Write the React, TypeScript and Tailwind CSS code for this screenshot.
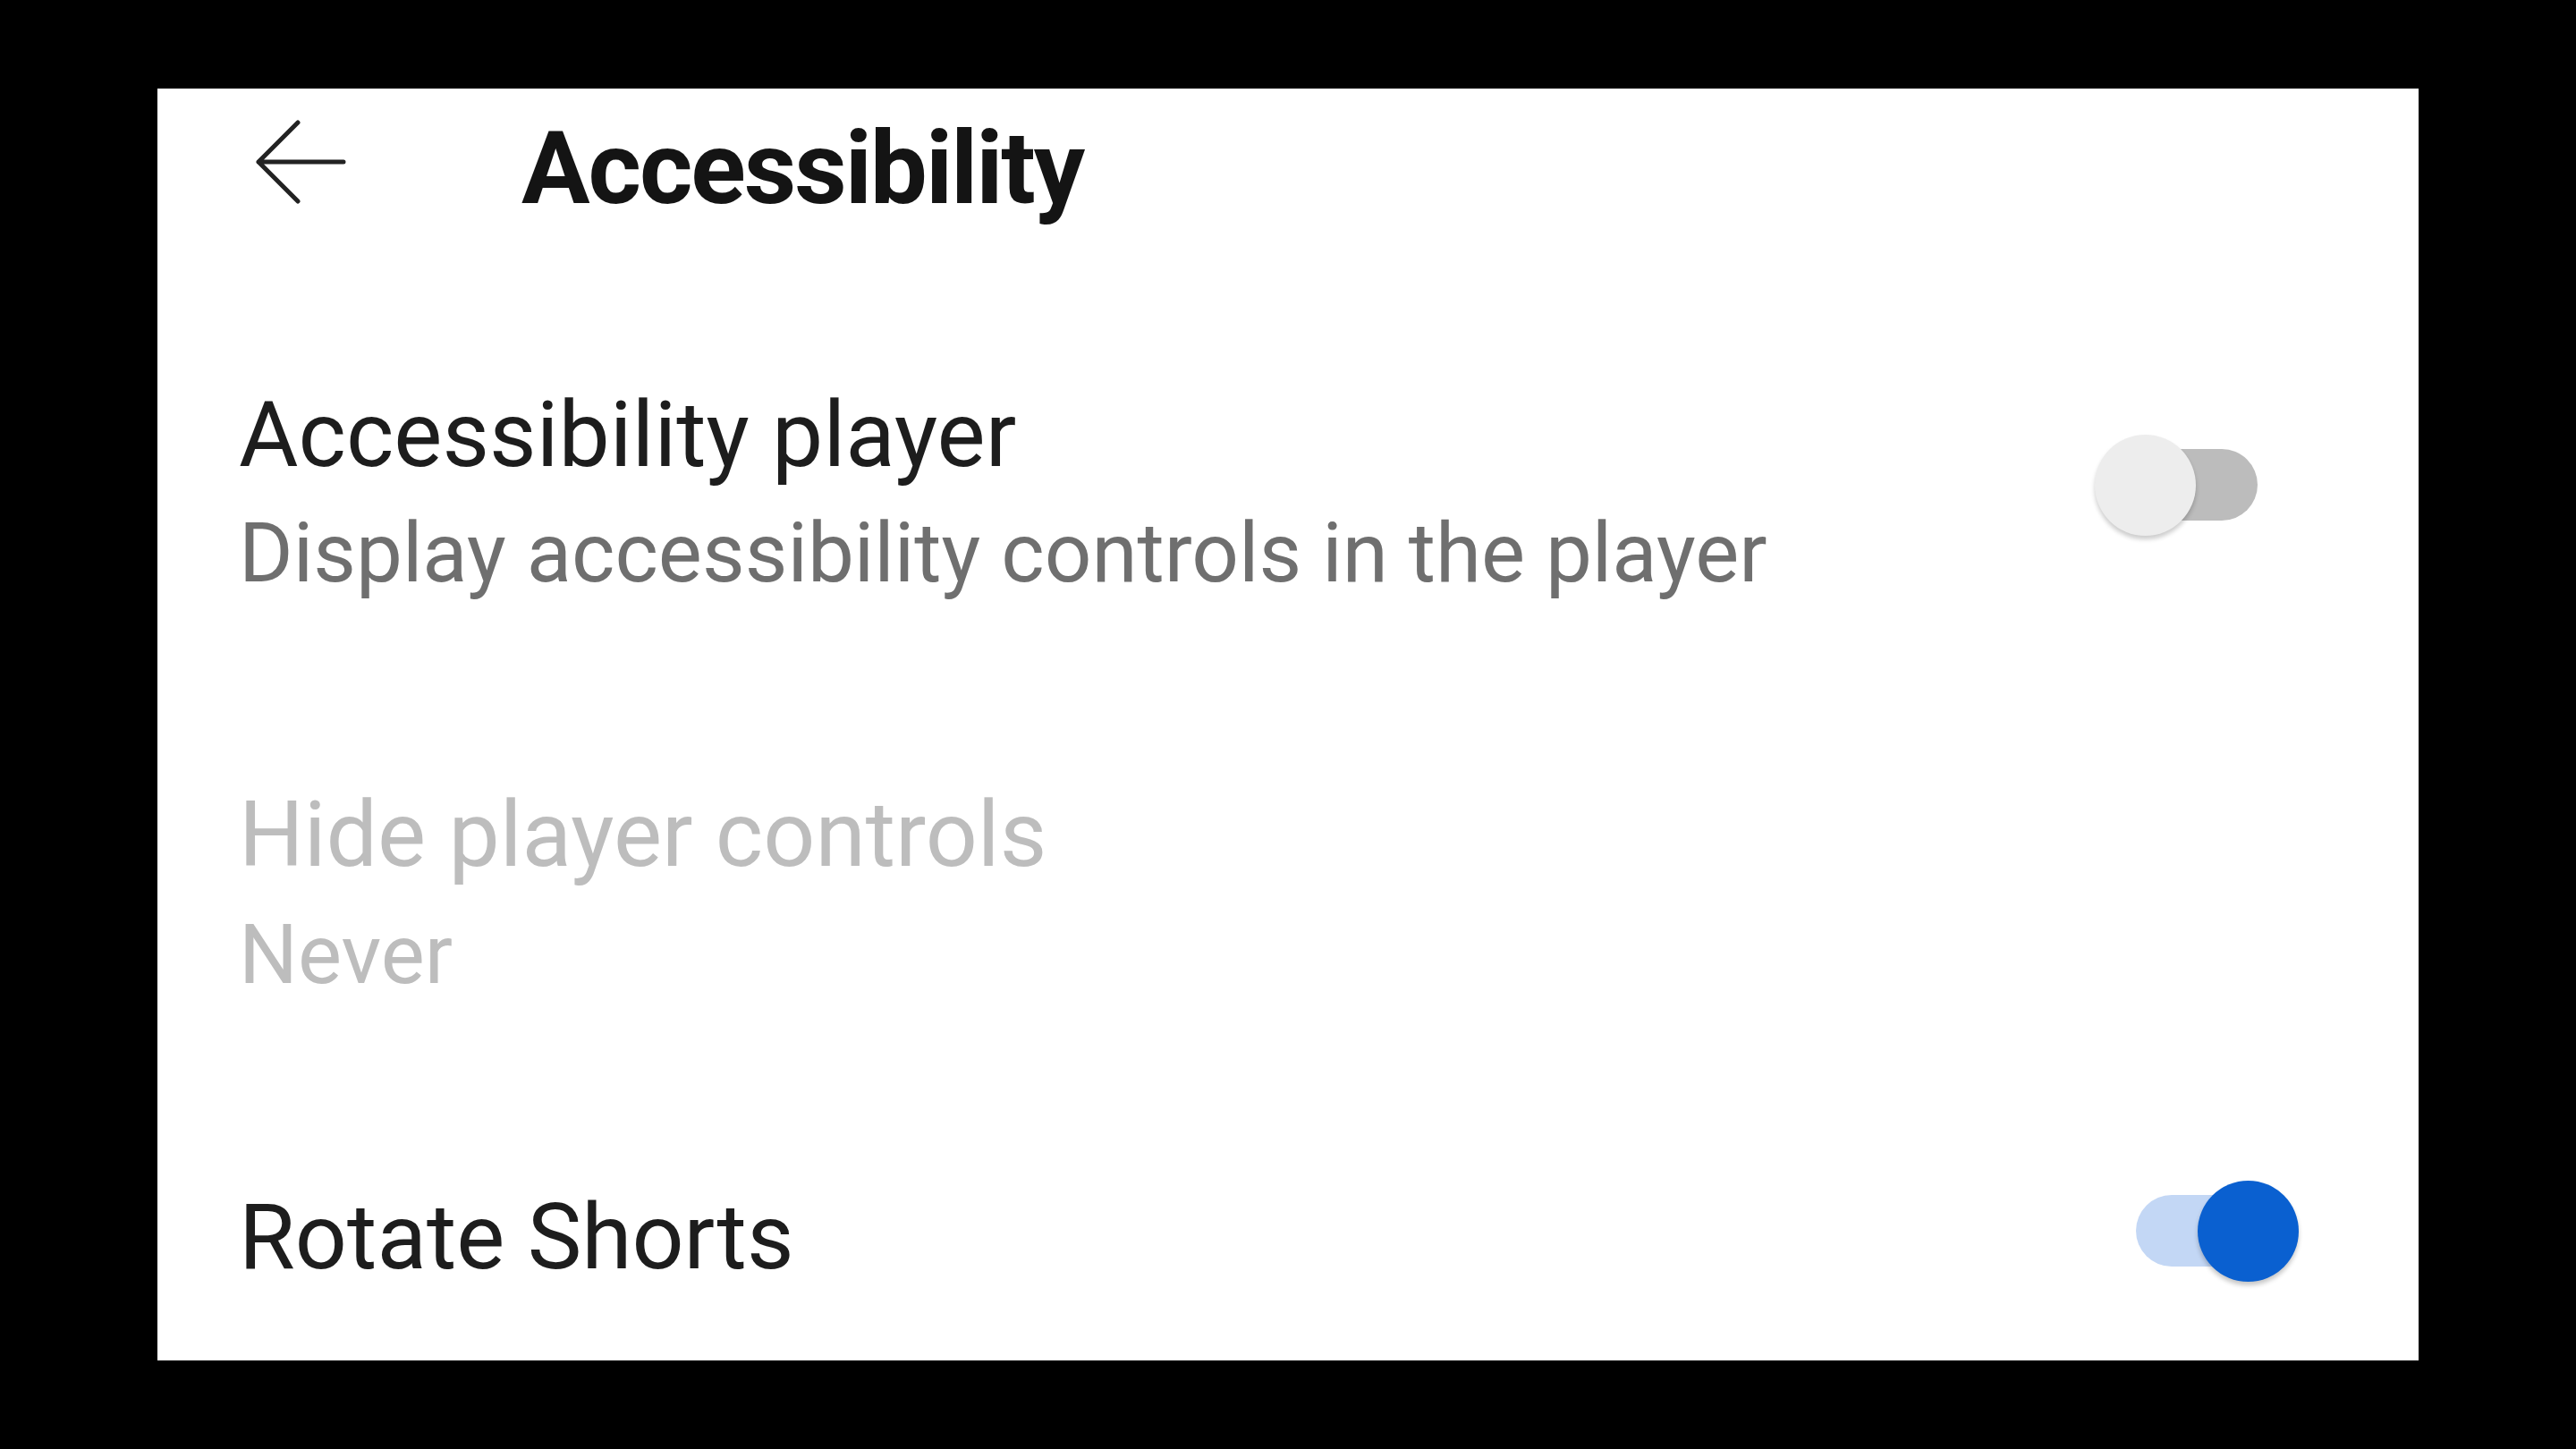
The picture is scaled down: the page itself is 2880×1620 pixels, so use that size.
import type { ReactNode } from 'react'

function BackArrow() {
  return (
    <svg viewBox="0 0 101 94" className="w-[101px] h-[94px] mt-[3px] flex-shrink-0" fill="none">
      <path d="M47 3 L3 47 L47 91 M3 47 H98" stroke="#222222" strokeWidth={5} strokeLinecap="round" strokeLinejoin="round" />
    </svg>
  )
}

function Toggle({ on }: { on: boolean }) {
  return (
    <div className="relative w-[182px] h-[113px] flex-shrink-0">
      {/* track */}
      <div
        className={
          on
            ? 'absolute top-[16px] left-0 right-[20px] h-[80px] rounded-full bg-[#c3d7f5]'
            : 'absolute top-[16px] left-[20px] right-0 h-[80px] rounded-full bg-[#bcbcbc]'
        }
      />
      {/* knob */}
      <div
        className={
          on
            ? 'absolute top-0 right-0 w-[113px] h-[113px] rounded-full bg-[#0a60d0] shadow-[0_4px_5px_rgba(0,0,0,0.22)]'
            : 'absolute top-0 left-0 w-[113px] h-[113px] rounded-full bg-[#ededed] shadow-[0_4px_5px_rgba(0,0,0,0.2)]'
        }
      />
    </div>
  )
}

function RowTitle({ children, muted }: { children: ReactNode; muted?: boolean }) {
  return (
    <p className={`text-[102px] leading-[120px] whitespace-nowrap ${muted ? 'text-[#bdbdbd]' : 'text-[#1d1d1d]'}`}>
      {children}
    </p>
  )
}

export default function App() {
  return (
    <div
      className="w-[2880px] h-[1620px] bg-black flex items-center justify-center overflow-hidden"
      style={{ fontFamily: 'Roboto, "Noto Sans", sans-serif' }}
    >
      <div className="w-[2528px] h-[1422px] bg-white flex flex-col">

        {/* ── Header ── */}
        <div className="flex items-start pt-[32px] pl-[110px]">
          <BackArrow />
          <h1 className="ml-[196px] text-[114px] leading-[114px] font-bold tracking-[-0.018em] text-[#141414] whitespace-nowrap">
            Accessibility
          </h1>
        </div>

        {/* ── Accessibility player ── */}
        <div className="flex items-start justify-between pl-[91px] pr-[134px] mt-[181px]">
          <div className="flex flex-col">
            <RowTitle>Accessibility player</RowTitle>
            <p className="mt-[18px] text-[92.5px] leading-[110px] text-[#6f6f6f] whitespace-nowrap">
              Display accessibility controls in the player
            </p>
          </div>
          <div className="mt-[60px] mr-[46px]">
            <Toggle on={false} />
          </div>
        </div>

        {/* ── Hide player controls (disabled) ── */}
        <div className="flex flex-col pl-[91px] mt-[199px]">
          <RowTitle muted>Hide player controls</RowTitle>
          <p className="mt-[20px] text-[92.5px] leading-[110px] text-[#bdbdbd] whitespace-nowrap">Never</p>
        </div>

        {/* ── Rotate Shorts ── */}
        <div className="flex items-start justify-between pl-[91px] pr-[134px] mt-[200px]">
          <RowTitle>Rotate Shorts</RowTitle>
          <div className="-mt-[3px]">
            <Toggle on />
          </div>
        </div>

      </div>
    </div>
  )
}
